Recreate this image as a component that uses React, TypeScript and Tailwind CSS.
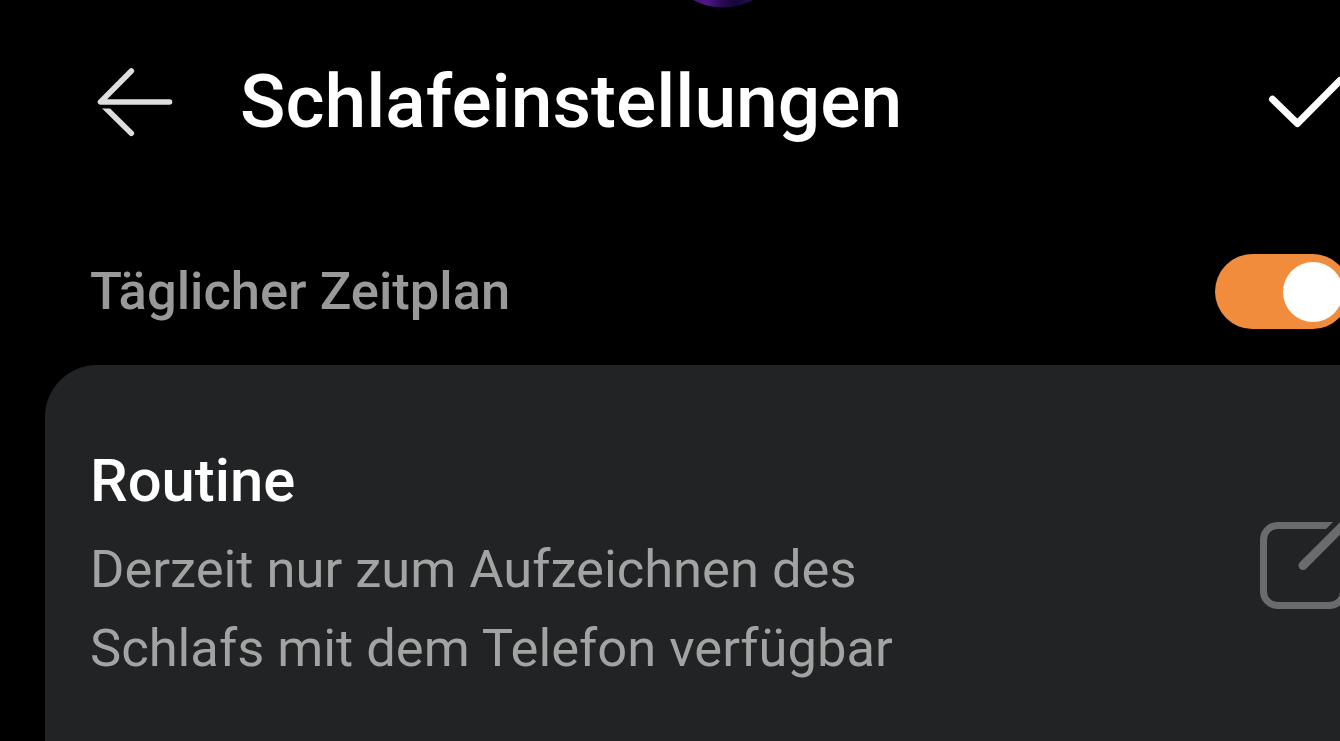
import React, { useState } from 'react';

const BackIcon: React.FC = () => (
    <svg width="80" height="72" viewBox="0 0 80 72" fill="none" stroke="#dedede" strokeWidth="5.6" strokeLinecap="round">
        <defs>
            <clipPath id="lower-stroke">
                <rect x="0" y="42.5" width="80" height="30" />
            </clipPath>
        </defs>
        <path d="M36.3 5 L5.5 36 H74.5" strokeLinejoin="round" />
        <path d="M5 36.5 L36.3 67.2" clipPath="url(#lower-stroke)" />
    </svg>
);

const CheckIcon: React.FC = () => (
    <svg width="80" height="72" viewBox="0 0 80 72" fill="none" stroke="#fff" strokeWidth="7" strokeLinecap="round" strokeLinejoin="round">
        <path d="M8.5 33.2 L33.4 57.5 L76 14.5" />
    </svg>
);

const EditIcon: React.FC = () => (
    <svg width="96" height="96" viewBox="0 0 96 96" fill="none" stroke="#6a6b6d" strokeWidth="7">
        <path d="M73 9.5 H17.5 A14 14 0 0 0 3.5 23.5 V75.5 A14 14 0 0 0 17.5 89.5 H69.5 A14 14 0 0 0 83.5 75.5 V36" />
        <path d="M65 14 L74 5 H79 V14 Z" fill="#222324" stroke="none" />
        <path d="M43 49.5 L88 4.5" strokeWidth="9" strokeLinecap="round" />
    </svg>
);

// Lower edge of the moon graphic that scrolls away above the header
const MoonEdge: React.FC = () => (
    <svg className="absolute left-[683px] top-0" width="80" height="10" viewBox="0 0 80 10">
        <defs>
            <linearGradient id="moon" gradientUnits="userSpaceOnUse" x1="8" y1="0" x2="72" y2="0">
                <stop offset="0" stopColor="#47146f" />
                <stop offset="0.25" stopColor="#4f1788" />
                <stop offset="0.5" stopColor="#250a50" />
                <stop offset="0.7" stopColor="#16063c" />
                <stop offset="1" stopColor="#250f55" />
            </linearGradient>
        </defs>
        <circle cx="40" cy="-57" r="64.5" fill="url(#moon)" />
    </svg>
);

interface ToggleProps {
    checked: boolean;
    onChange: (checked: boolean) => void;
}

const Toggle: React.FC<ToggleProps> = ({ checked, onChange }) => (
    <button
        type="button"
        role="switch"
        aria-checked={checked}
        onClick={() => onChange(!checked)}
        className={`flex h-[75px] w-[135px] shrink-0 items-center rounded-full px-[7.5px] ${checked ? 'justify-end bg-[#f08c3c]' : 'justify-start bg-[#4a4a4a]'}`}
    >
        <span className="size-[60px] rounded-full bg-white" />
    </button>
);

export default function App() {
    const [daily, setDaily] = useState(true);

    return (
        <div className="relative h-[741px] w-[1340px] overflow-hidden bg-black font-['Roboto',sans-serif]">
            <MoonEdge />
            <div className="flex h-full w-[1400px] flex-col">
                <header className="flex h-[204px] shrink-0 items-center pl-[95px]">
                    <button type="button" aria-label="Zurück">
                        <BackIcon />
                    </button>
                    <h1 className="ml-[65px] flex-1 pb-[2px] text-[75px] leading-[80px] font-medium whitespace-nowrap text-white">
                        Schlafeinstellungen
                    </h1>
                    <button type="button" aria-label="Speichern" className="mr-[56px]">
                        <CheckIcon />
                    </button>
                </header>

                <div className="flex h-[161px] shrink-0 items-center justify-between pt-[14px] pr-[50px] pl-[90px]">
                    <span className="pb-[2px] text-[52.5px] leading-[60px] font-medium text-[#999]">Täglicher Zeitplan</span>
                    <Toggle checked={daily} onChange={setDaily} />
                </div>

                <section className="ml-[45px] flex flex-1 items-start justify-between rounded-tl-[52px] bg-[#222324] pr-[44px] pl-[45px]">
                    <div className="pt-[81px]">
                        <h2 className="text-[59.8px] leading-[70px] font-medium text-white">Routine</h2>
                        <p className="mt-[14px] w-[850px] text-[52.5px] leading-[79px] text-[#a2a3a3]">
                            Derzeit nur zum Aufzeichnen des
                            <br />
                            Schlafs mit dem Telefon verfügbar
                        </p>
                    </div>
                    <button type="button" aria-label="Bearbeiten" className="mt-[151px]">
                        <EditIcon />
                    </button>
                </section>
            </div>
        </div>
    );
}
